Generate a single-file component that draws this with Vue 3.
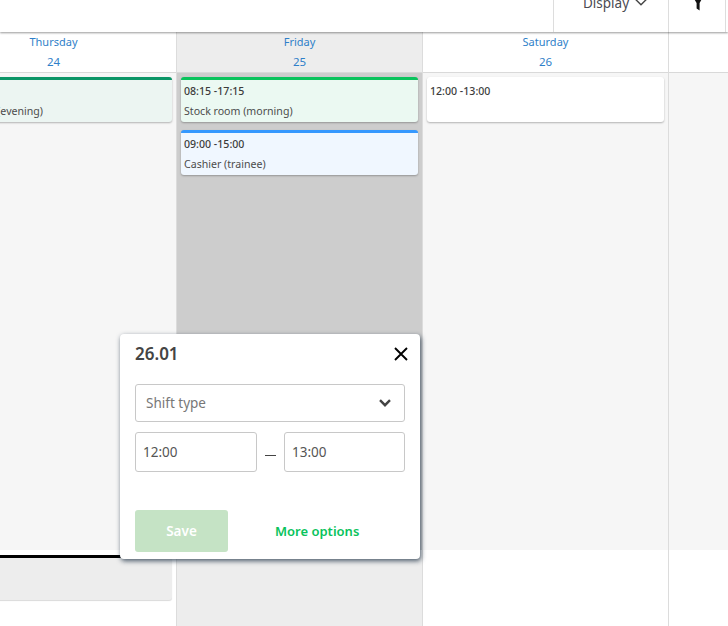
<script setup>
const days = [
  { name: 'Thursday', num: 24, cls: 'thu' },
  { name: 'Friday', num: 25, cls: 'fri' },
  { name: 'Saturday', num: 26, cls: 'sat' },
  { name: '', num: '', cls: 'sun' }
]
</script>

<template>
  <div class="page">
    <header class="topbar">
      <div class="top-spacer"></div>
      <div class="top-display">
        <span>Display</span>
        <svg width="14" height="8" viewBox="0 0 14 8"><path d="M1.2 1l5.8 5.8L12.8 1" fill="none" stroke="#444" stroke-width="1.4"/></svg>
      </div>
      <div class="top-filter">
        <svg width="10" height="14" viewBox="0 0 10 14"><path d="M0 0h10L6.6 6v7.6L3.6 11.6V6z" fill="#111"/></svg>
      </div>
    </header>

    <div class="grid">
      <div v-for="d in days" :key="d.cls" class="col" :class="d.cls">
        <div class="day-head">
          <span class="day-name">{{ d.name }}</span>
          <span class="day-num">{{ d.num }}</span>
        </div>
        <div class="day-body">
          <template v-if="d.cls === 'thu'">
            <div class="shift shift-thu"><p class="time">16:00 -21:00</p><p class="label">Stock room (evening)</p></div>
          </template>
          <template v-if="d.cls === 'fri'">
            <div class="shift shift-green"><p class="time">08:15 -17:15</p><p class="label">Stock room (morning)</p></div>
            <div class="shift shift-blue"><p class="time">09:00 -15:00</p><p class="label">Cashier (trainee)</p></div>
          </template>
          <template v-if="d.cls === 'sat'">
            <div class="shift shift-white"><p class="time">12:00 -13:00</p><p class="label">&nbsp;</p></div>
          </template>
        </div>
        <div class="day-foot">
          <div v-if="d.cls === 'thu'" class="foot-card"></div>
        </div>
      </div>
    </div>

    <div class="popup">
      <div class="pop-head">
        <span class="pop-date">26.01</span>
        <svg class="pop-close" width="14" height="14" viewBox="0 0 14 14"><path d="M1 1l12 12M13 1L1 13" stroke="#000" stroke-width="1.9" fill="none"/></svg>
      </div>
      <div class="select">
        <span>Shift type</span>
        <svg width="12" height="8" viewBox="0 0 12 8"><path d="M1 1.2l5 5 5-5" fill="none" stroke="#444" stroke-width="2.4"/></svg>
      </div>
      <div class="times">
        <div class="time-input first">12:00</div>
        <span class="dash"></span>
        <div class="time-input second">13:00</div>
      </div>
      <div class="actions">
        <div class="save">Save</div>
        <div class="more">More options</div>
      </div>
    </div>
  </div>
</template>

<style>
html, body { margin: 0; padding: 0; background: #fff; overflow: hidden; }
</style>

<style scoped>
.page {
  position: relative;
  width: 728px;
  height: 626px;
  overflow: hidden;
  background: #fff;
  font-family: "Noto Sans", "Open Sans", sans-serif;
  color: #444;
}
p { margin: 0; }
.topbar {
  display: flex;
  height: 32px;
  box-sizing: border-box;
  position: relative;
  z-index: 2;
  background: #fff;
  box-shadow: 0 1px 2px rgba(0, 0, 0, .4);
}
.top-spacer { width: 553px; }
.top-display {
  width: 116px;
  box-sizing: border-box;
  border-left: 1px solid #ddd;
  border-right: 1px solid #ddd;
  display: flex;
  gap: 5px;
  padding-left: 29px;
  font-size: 13.5px;
  line-height: 6px;
  color: #4a4a52;
}
.top-display svg { margin-top: -2px; flex: none; }
.top-filter {
  width: 57px;
  padding-left: 24px;
  box-sizing: border-box;
  border-right: 1px solid #ddd;
  margin-right: 2px;
}
.top-filter svg { display: block; margin-top: -3px; }
.grid {
  display: grid;
  grid-template-columns: 246px 246px 246px 246px;
  height: 594px;
  margin-left: -69px;
}
.col { display: flex; flex-direction: column; box-sizing: border-box; border-right: 1px solid #dcdcdc; }
.day-head {
  height: 41px;
  box-sizing: border-box;
  border-bottom: 1px solid #d9d9d9;
  display: flex;
  flex-direction: column;
  align-items: center;
  color: #2f7fc9;
  font-size: 11.5px;
  line-height: 20px;
}
.day-name { font-size: 11px; }
.day-body { height: 477px; background: #f6f6f6; padding: 4px; box-sizing: border-box; display: flex; flex-direction: column; gap: 8px; }
.day-foot { flex: 1; }
.fri .day-head, .fri .day-foot { background: #ededed; }
.fri .day-body { background: #cdcdcd; }
.shift {
  height: 45px;
  box-sizing: border-box;
  border-radius: 3px;
  border-top: 3px solid transparent;
  box-shadow: 0 1px 2px rgba(0, 0, 0, .28);
  padding: 1px 0 0 3px;
  font-size: 10.6px;
  line-height: 20px;
  overflow: hidden;
}
.time { font-weight: 500; color: #3c3c3c; }
.label { color: #4c4c4c; }
.shift-thu { background: #ecf5f2; border-top-color: #0b9566; }
.shift-green { background: #ebf9f2; border-top-color: #09c35c; }
.shift-blue { background: #f0f7ff; border-top-color: #3598fe; }
.shift-white { background: #fff; border-top-color: #fff; }
.foot-card {
  margin: 5px 4px 0;
  height: 45px;
  background: #ededed;
  border-top: 3px solid #000;
  border-radius: 3px;
  box-shadow: 0 1px 1px rgba(0, 0, 0, .15);
  box-sizing: border-box;
}
.popup {
  position: absolute;
  left: 120px;
  top: 334px;
  width: 300px;
  height: 225px;
  box-sizing: border-box;
  padding: 0 15px;
  background: #fff;
  border-radius: 4px;
  box-shadow: 1px 2px 5px rgba(20, 40, 60, .75);
  z-index: 3;
}
.pop-head {
  height: 38px;
  margin-bottom: 12px;
  display: flex;
  align-items: center;
  justify-content: space-between;
}
.pop-date { font-size: 17px; font-weight: 600; color: #444; }
.pop-close { margin-right: -3px; margin-top: 1px; }
.select {
  height: 38px;
  box-sizing: border-box;
  border: 1px solid #c8c8c8;
  border-radius: 3px;
  display: flex;
  align-items: center;
  justify-content: space-between;
  padding: 0 13px 0 10px;
  color: #777;
  font-size: 13.5px;
}
.times { display: flex; align-items: center; margin-top: 10px; }
.time-input {
  height: 40px;
  box-sizing: border-box;
  border: 1px solid #c8c8c8;
  border-radius: 3px;
  padding-left: 7px;
  display: flex;
  align-items: center;
  color: #555;
  font-size: 13.5px;
}
.first { width: 122px; }
.second { width: 121px; }
.dash { width: 11px; height: 1px; background: #444; margin: 6px 8px 0 8px; }
.actions { display: flex; align-items: center; margin-top: 38px; }
.save {
  width: 93px;
  height: 42px;
  background: #c5e3c5;
  border-radius: 3px;
  color: #fff;
  font-weight: 600;
  font-size: 13.5px;
  display: flex;
  align-items: center;
  justify-content: center;
}
.more { margin-left: 47px; color: #09c35c; font-weight: 600; font-size: 13px; }
</style>
